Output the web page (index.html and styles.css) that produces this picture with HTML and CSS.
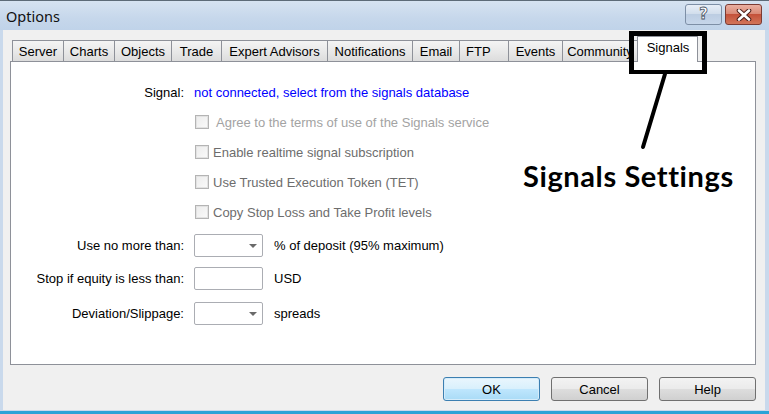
FILE: index.html
```html
<!DOCTYPE html>
<html>
<head>
<meta charset="utf-8">
<link rel="stylesheet" href="styles.css">
</head>
<body>
<div class="window">
  <div class="titlebar">
    <span class="title">Options</span>
    <div class="caption-buttons">
      <div class="cbtn cbtn-help"><span class="qmark">?</span></div>
      <div class="cbtn cbtn-close">
        <svg width="18" height="12" viewBox="0 0 18 12">
          <path d="M4 1.5 L14 10.5 M14 1.5 L4 10.5" stroke="#4a1e1a" stroke-width="4.6" stroke-linecap="round"/>
          <path d="M4 1.5 L14 10.5 M14 1.5 L4 10.5" stroke="#ffffff" stroke-width="2.6" stroke-linecap="round"/>
        </svg>
      </div>
    </div>
  </div>
  <div class="client">
    <div class="tabs">
      <div class="tab t-server">Server</div>
      <div class="tab t-charts">Charts</div>
      <div class="tab t-objects">Objects</div>
      <div class="tab t-trade">Trade</div>
      <div class="tab t-ea">Expert Advisors</div>
      <div class="tab t-notif">Notifications</div>
      <div class="tab t-email">Email</div>
      <div class="tab t-ftp">FTP</div>
      <div class="tab t-events">Events</div>
      <div class="tab t-community">Community</div>
      <div class="tab tab-selected">Signals</div>
    </div>
    <div class="panel">
      <div class="row row-signal">
        <div class="label">Signal:</div>
        <div class="ctrl"><span class="link">not connected, select from the signals database</span></div>
      </div>
      <div class="row row-check">
        <div class="label"></div>
        <div class="ctrl"><span class="checkbox"></span><span class="cb-text cb-agree">Agree to the terms of use of the Signals service</span></div>
      </div>
      <div class="row row-check">
        <div class="label"></div>
        <div class="ctrl"><span class="checkbox"></span><span class="cb-text">Enable realtime signal subscription</span></div>
      </div>
      <div class="row row-check">
        <div class="label"></div>
        <div class="ctrl"><span class="checkbox"></span><span class="cb-text">Use Trusted Execution Token (TET)</span></div>
      </div>
      <div class="row row-check">
        <div class="label"></div>
        <div class="ctrl"><span class="checkbox"></span><span class="cb-text">Copy Stop Loss and Take Profit levels</span></div>
      </div>
      <div class="row row-field row-use">
        <div class="label">Use no more than:</div>
        <div class="ctrl"><div class="field"><span class="arrow"></span></div><span class="unit">% of deposit (95% maximum)</span></div>
      </div>
      <div class="row row-field row-stop">
        <div class="label">Stop if equity is less than:</div>
        <div class="ctrl"><div class="field"></div><span class="unit">USD</span></div>
      </div>
      <div class="row row-field row-dev">
        <div class="label">Deviation/Slippage:</div>
        <div class="ctrl"><div class="field"><span class="arrow"></span></div><span class="unit">spreads</span></div>
      </div>
    </div>
    <div class="buttons">
      <div class="btn btn-default">OK</div>
      <div class="btn">Cancel</div>
      <div class="btn">Help</div>
    </div>
  </div>
  <div class="ann-box"></div>
  <svg class="ann-line" width="769" height="414" viewBox="0 0 769 414">
    <line x1="665" y1="74" x2="643" y2="147" stroke="#000" stroke-width="4" stroke-linecap="round"/>
  </svg>
  <div class="ann-text">Signals Settings</div>
</div>
</body>
</html>
```
FILE: styles.css
```css
html, body {
  margin: 0;
  padding: 0;
}
body {
  width: 769px;
  height: 414px;
  overflow: hidden;
  font-family: "Liberation Sans", Arial, sans-serif;
  font-size: 13px;
  color: #000;
}
.window {
  position: relative;
  width: 769px;
  height: 414px;
  box-sizing: border-box;
  display: flex;
  flex-direction: column;
  background: #c9d9ec;
  border-top: 1px solid #5d6b78;
  border-bottom: 3px solid #2ba3d7;
  padding: 0 4px 1px 3px;
}
.titlebar {
  height: 29px;
  display: flex;
  align-items: center;
  justify-content: space-between;
  margin-left: -3px;
  margin-right: -4px;
  padding-left: 6px;
  padding-right: 7px;
  background: linear-gradient(#d6e3f1, #c6d7eb 60%, #c0d3e9);
}
.title {
  font-family: "Noto Sans", "Open Sans", sans-serif;
  font-size: 14.5px;
  color: #111;
  margin-top: 1px;
}
.caption-buttons {
  display: flex;
  gap: 3px;
  align-self: flex-start;
  margin-top: 3px;
}
.cbtn {
  width: 37px;
  height: 21px;
  box-sizing: border-box;
  border-radius: 3px;
  display: flex;
  align-items: center;
  justify-content: center;
}
.cbtn-help {
  border: 1px solid #7d8fa6;
  background: linear-gradient(#e7eef7, #d2deec 45%, #bccde2 50%, #c6d6ea);
}
.qmark {
  font-family: "DejaVu Sans", sans-serif;
  font-weight: bold;
  font-size: 15px;
  color: #fff;
  -webkit-text-stroke: 0.8px #4b5563;
  line-height: 1;
}
.cbtn-close {
  border: 1px solid #7b3b33;
  background: linear-gradient(#eab0a2, #d98a77 45%, #c4513a 50%, #d27559);
}
.client {
  flex: 1;
  background: #f0f0f0;
  display: flex;
  flex-direction: column;
}
.tabs {
  display: flex;
  align-items: flex-end;
  height: 21px;
  margin-top: 10px;
  margin-left: 9px;
}
.tab {
  height: 21px;
  box-sizing: border-box;
  margin-right: -1px;
  border: 1px solid #8e9199;
  border-bottom: none;
  background: linear-gradient(#f4f4f4, #e9e9e9 50%, #dcdcdc);
  display: flex;
  align-items: center;
  justify-content: center;
  white-space: nowrap;
  padding-top: 1px;
}
.t-server { width: 52px; }
.t-charts { width: 52px; }
.t-objects { width: 58px; }
.t-trade { width: 51px; }
.t-ea { width: 107px; }
.t-notif { width: 86px; }
.t-email { width: 48px; }
.t-ftp { width: 50px; justify-content: flex-start; padding-left: 6px; }
.t-events { width: 55px; }
.t-community { width: 76px; }
.tab-selected {
  position: relative;
  z-index: 1;
  width: 61px;
  height: 26px;
  margin-bottom: -1px;
  padding: 0 0 5px 1px;
  background: #fff;
}
.panel {
  height: 304px;
  box-sizing: border-box;
  margin: 0 9px 0 7px;
  background: #fff;
  border: 1px solid #8e9199;
  padding-top: 15px;
  display: flex;
  flex-direction: column;
}
.row {
  display: grid;
  grid-template-columns: 173px 1fr;
  column-gap: 10px;
  align-items: center;
}
.row-signal, .row-check {
  height: 30px;
}
.label {
  text-align: right;
  white-space: nowrap;
}
.ctrl {
  display: flex;
  align-items: center;
  white-space: nowrap;
}
.link {
  color: #0000ff;
}
.checkbox {
  width: 12px;
  height: 12px;
  margin-left: 1px;
  border: 1px solid #b4b4b4;
  background: linear-gradient(135deg, #ececec, #fafafa);
  box-shadow: inset 0 0 0 1px #e2e2e2;
}
.cb-text {
  margin-left: 4px;
  color: #6d6d6d;
}
.cb-agree {
  margin-left: 7px;
  color: #a3a3a3;
}
.row-field {
  height: 23px;
}
.row-use { margin-top: 7px; }
.row-stop { margin-top: 10px; }
.row-dev { margin-top: 12px; }
.field {
  position: relative;
  width: 69px;
  height: 23px;
  box-sizing: border-box;
  border: 1px solid #abadb3;
  border-radius: 2px;
  background: #fff;
}
.arrow {
  position: absolute;
  right: 5px;
  top: 9px;
  width: 0;
  height: 0;
  border-left: 4px solid transparent;
  border-right: 4px solid transparent;
  border-top: 4px solid #6a6a6a;
}
.unit {
  margin-left: 11px;
}
.buttons {
  display: flex;
  justify-content: flex-end;
  gap: 11px;
  margin-top: 12px;
  padding-right: 9px;
}
.btn {
  width: 97px;
  height: 24px;
  box-sizing: border-box;
  border: 1px solid #707070;
  border-radius: 3px;
  background: linear-gradient(#f3f3f3, #ebebeb 48%, #dddddd 52%, #d0d0d0);
  display: flex;
  align-items: center;
  justify-content: center;
}
.btn-default {
  border-color: #3c7fb1;
  background: linear-gradient(#eaf6fd, #d9f0fc 48%, #bee6fd 52%, #a9dbf6);
  box-shadow: inset 0 0 0 1px #d5ecfa;
}
.ann-box {
  position: absolute;
  left: 629px;
  top: 30px;
  width: 78px;
  height: 43px;
  box-sizing: border-box;
  border: 5px solid #000;
  border-bottom-width: 4px;
  z-index: 2;
}
.ann-line {
  position: absolute;
  left: 0;
  top: -1px;
  z-index: 2;
  pointer-events: none;
}
.ann-text {
  position: absolute;
  left: 523px;
  top: 160px;
  font-family: Lato, "Open Sans", sans-serif;
  font-weight: bold;
  font-size: 29px;
  letter-spacing: 0.6px;
  line-height: 29px;
  color: #000;
  white-space: nowrap;
  z-index: 2;
}
```
